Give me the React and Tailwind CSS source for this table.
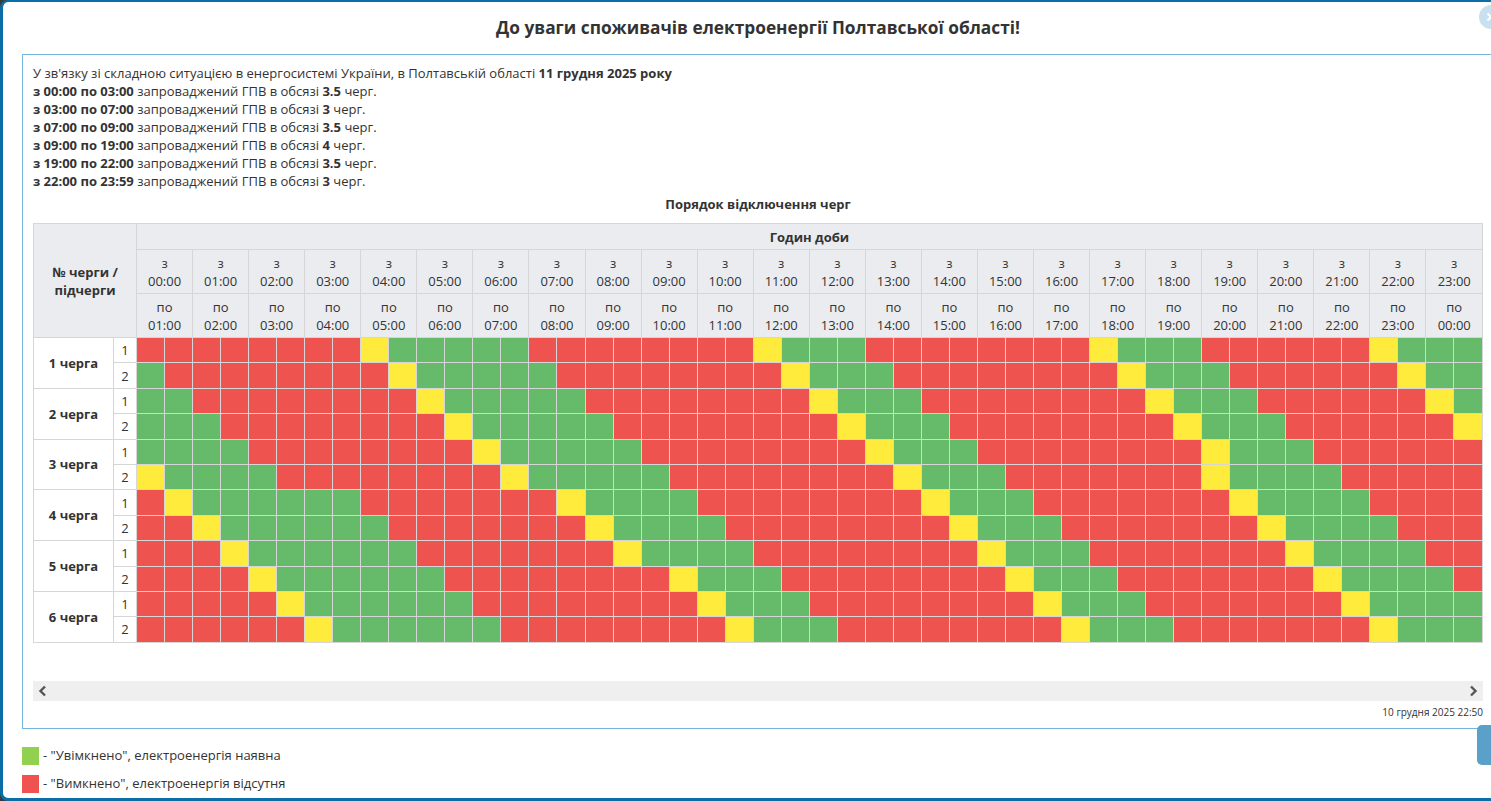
import React from 'react';

// run-length rows: "R8 Y1 G5" -> RRRRRRRRYGGGGG
const seq = (s) =>
  s.split(' ').flatMap((t) => Array(parseInt(t.slice(1), 10)).fill(t[0]));

const rows = [
  seq('R8 Y1 G5 R8 Y1 G3 R8 Y1 G3 R6 Y1 G3'),
  seq('G1 R8 Y1 G5 R8 Y1 G3 R8 Y1 G3 R6 Y1 G2'),
  seq('G2 R8 Y1 G5 R8 Y1 G3 R8 Y1 G3 R6 Y1 G1'),
  seq('G3 R8 Y1 G5 R8 Y1 G3 R8 Y1 G3 R6 Y1'),
  seq('G4 R8 Y1 G5 R8 Y1 G3 R8 Y1 G3 R6'),
  seq('Y1 G4 R8 Y1 G5 R8 Y1 G3 R7 Y1 G4 R5'),
  seq('R1 Y1 G6 R7 Y1 G4 R8 Y1 G3 R7 Y1 G4 R4'),
  seq('R2 Y1 G6 R7 Y1 G4 R8 Y1 G3 R7 Y1 G4 R3'),
  seq('R3 Y1 G6 R7 Y1 G4 R8 Y1 G3 R7 Y1 G4 R2'),
  seq('R4 Y1 G6 R8 Y1 G3 R8 Y1 G3 R7 Y1 G4 R1'),
  seq('R5 Y1 G6 R8 Y1 G3 R8 Y1 G3 R7 Y1 G4'),
  seq('R6 Y1 G6 R8 Y1 G3 R8 Y1 G3 R7 Y1 G3'),
];

const cellColor = {
  R: 'bg-[#ef5350]',
  G: 'bg-[#66bb6a]',
  Y: 'bg-[#ffeb3b]',
};

const pad = (n) => String(n).padStart(2, '0') + ':00';
const hours = Array.from({ length: 24 }, (_, i) => i);

const periods = [
  ['00:00', '03:00', '3.5'],
  ['03:00', '07:00', '3'],
  ['07:00', '09:00', '3.5'],
  ['09:00', '19:00', '4'],
  ['19:00', '22:00', '3.5'],
  ['22:00', '23:59', '3'],
];

export default function App() {
  return (
    <div
      className="w-[1491px] h-[801px] overflow-hidden bg-[#3a3a3a] text-[#333]"
      style={{ fontFamily: '"Open Sans", "Noto Sans", sans-serif' }}
    >
      <div className="relative w-[1516px] h-[801px] bg-white border-t-[2px] border-l-[3px] border-r-[3px] border-b-[3px] border-[#0b6ea8] rounded-[8px] px-[19px]">
        {/* close button */}
        <div className="absolute right-[10px] top-[3px] w-[24px] h-[24px] rounded-full bg-[#c9e0f0] flex items-center justify-center">
          <svg width="10" height="10" viewBox="0 0 10 10">
            <path d="M1.5 1.5 L8.5 8.5 M8.5 1.5 L1.5 8.5" stroke="#fff" strokeWidth="2.2" />
          </svg>
        </div>

        <h1 className="pt-[14px] h-[52px] text-center text-[17.3px] leading-[24px] font-bold">
          До уваги споживачів електроенергії Полтавської області!
        </h1>

        <div className="border border-[#76b5dd] px-[10px] pt-[9px] pb-[7px]">
          <div className="text-[13px] leading-[18px]">
            <div>
              У зв'язку зі складною ситуацією в енергосистемі України, в Полтавській області{' '}
              <b>11 грудня 2025 року</b>
            </div>
            {periods.map(([a, b, q]) => (
              <div key={a}>
                <b>
                  з {a} по {b}
                </b>{' '}
                запроваджений ГПВ в обсязі <b>{q}</b> черг.
              </div>
            ))}
          </div>

          <div className="mt-[5px] mb-[10px] text-center text-[13px] leading-[18px] font-bold">
            Порядок відключення черг
          </div>

          <table className="table-fixed w-[1450px] border-collapse text-[13px] leading-[18px]">
            <colgroup>
              <col className="w-[80px]" />
              <col className="w-[23px]" />
              {hours.map((h) => (
                <React.Fragment key={h}>
                  <col />
                  <col />
                </React.Fragment>
              ))}
            </colgroup>
            <thead className="bg-[#ebecf0]">
              <tr className="h-[26px]">
                <th rowSpan={3} colSpan={2} className="border border-[#d6d6d6] font-bold">
                  № черги /<br />
                  підчерги
                </th>
                <th colSpan={48} className="border border-[#d6d6d6] font-bold">
                  Годин доби
                </th>
              </tr>
              <tr className="h-[44px]">
                {hours.map((h) => (
                  <th key={h} colSpan={2} className="border border-[#d6d6d6] font-normal">
                    з<br />
                    {pad(h)}
                  </th>
                ))}
              </tr>
              <tr className="h-[44px]">
                {hours.map((h) => (
                  <th key={h} colSpan={2} className="border border-[#d6d6d6] font-normal">
                    по<br />
                    {pad((h + 1) % 24)}
                  </th>
                ))}
              </tr>
            </thead>
            <tbody>
              {rows.map((cells, r) => (
                <tr key={r} className="h-[25.4px]">
                  {r % 2 === 0 && (
                    <td rowSpan={2} className="border border-[#d6d6d6] text-center font-bold">
                      {r / 2 + 1} черга
                    </td>
                  )}
                  <td className="border border-[#d6d6d6] text-center">{(r % 2) + 1}</td>
                  {cells.map((c, i) => (
                    <td key={i} className={`border border-[#d6d6d6] p-0 ${cellColor[c]}`} />
                  ))}
                </tr>
              ))}
            </tbody>
          </table>

          <div className="mt-[38px] h-[20px] w-[1450px] bg-[#efefef] flex items-center justify-between px-[5px]">
            <svg width="10" height="12" viewBox="0 0 10 12">
              <path d="M7 1.5 L2.5 6 L7 10.5" fill="none" stroke="#555" strokeWidth="2.4" />
            </svg>
            <svg width="10" height="12" viewBox="0 0 10 12">
              <path d="M3 1.5 L7.5 6 L3 10.5" fill="none" stroke="#555" strokeWidth="2.4" />
            </svg>
          </div>

          <div className="mt-[2px] w-[1450px] text-right text-[10px] leading-[18px]">
            10 грудня 2025 22:50
          </div>
        </div>

        <div className="mt-[18px] flex flex-col gap-[10px] text-[13px]">
          <div className="flex items-center h-[18px]">
            <span className="w-[17px] h-[18px] bg-[#92d050]" />
            <span className="ml-[4px]">- "Увімкнено", електроенергія наявна</span>
          </div>
          <div className="flex items-center h-[18px]">
            <span className="w-[17px] h-[18px] bg-[#f0524f]" />
            <span className="ml-[4px]">- "Вимкнено", електроенергія відсутня</span>
          </div>
        </div>

        {/* side tab */}
        <div className="absolute left-[1474px] top-[723px] w-[30px] h-[40px] rounded-l-[5px] bg-[#5aa0c8]" />
      </div>
    </div>
  );
}
